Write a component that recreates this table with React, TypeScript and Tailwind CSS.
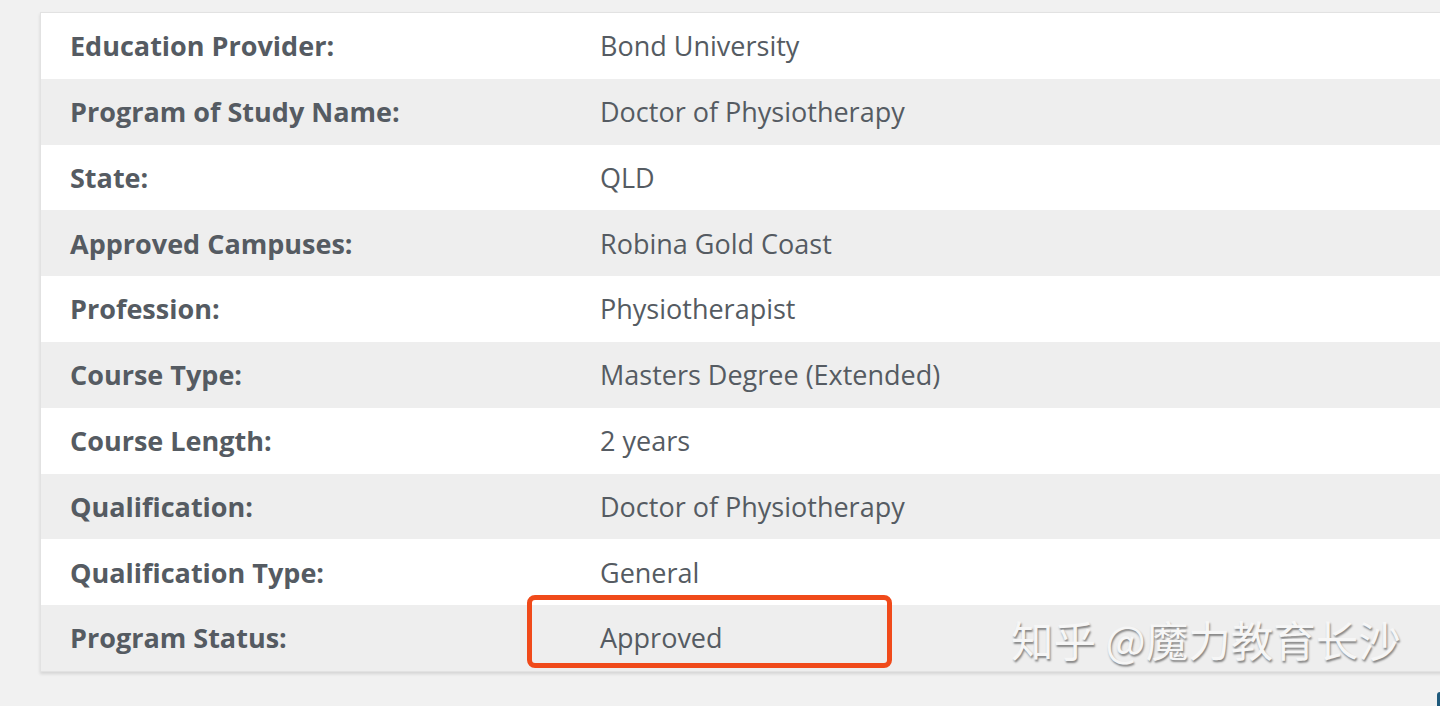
const rows: [string, string][] = [
  ["Education Provider:", "Bond University"],
  ["Program of Study Name:", "Doctor of Physiotherapy"],
  ["State:", "QLD"],
  ["Approved Campuses:", "Robina Gold Coast"],
  ["Profession:", "Physiotherapist"],
  ["Course Type:", "Masters Degree (Extended)"],
  ["Course Length:", "2 years"],
  ["Qualification:", "Doctor of Physiotherapy"],
  ["Qualification Type:", "General"],
  ["Program Status:", "Approved"],
];

export default function App() {
  return (
    <div
      className="relative w-[1440px] h-[706px] overflow-hidden bg-[#f1f1f1] pt-[12px] pl-[40px]"
      style={{ fontFamily: '"Open Sans", "Noto Sans", sans-serif' }}
    >
      <div className="relative border border-[#e2e2e2] bg-white shadow-[0_2px_3px_rgba(0,0,0,0.12)] w-[1420px]">
        {rows.map(([label, value], i) => (
          <div
            key={label}
            className={`flex items-center h-[65.8px] pt-[1px] text-[27px] text-[#555b62] ${i % 2 === 1 ? "bg-[#eeeeee]" : "bg-white"}`}
          >
            <div className="w-[559px] pl-[29px] font-bold">{label}</div>
            <div>{value}</div>
          </div>
        ))}
        {/* orange highlight */}
        <div className="absolute left-[486px] top-[582px] w-[365px] h-[73px] border-[5px] border-[#f04a1a] rounded-[8px]" />
      </div>

      {/* watermark */}
      <div
        className="absolute left-[1011px] top-[618px] text-[42.5px] leading-none text-[#f6f6f6]"
        style={{
          fontFamily: '"Noto Sans CJK SC", sans-serif',
          textShadow: "1px 2px 2px rgba(0,0,0,0.45)",
        }}
      >
        知乎 @魔力教育长沙
      </div>

      <div className="absolute left-[1437px] top-[692px] w-[4px] h-[14px] rounded-tl-[3px] bg-[#1f5a7c]" />
    </div>
  );
}
